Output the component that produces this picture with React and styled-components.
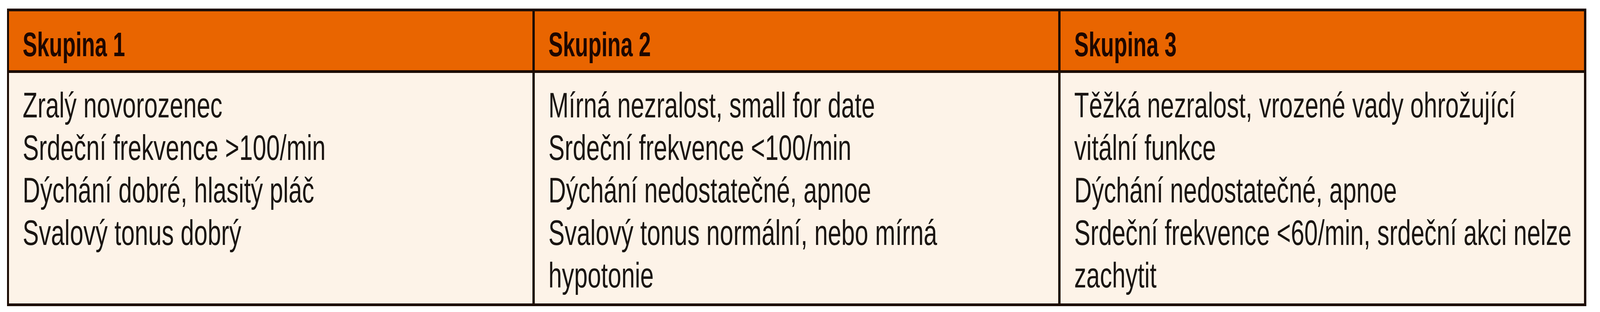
import React, { useEffect, useState } from 'react';
import styled, { createGlobalStyle } from 'styled-components';

// the layout was measured on a 5067px wide page; widths are kept relative
// so the table keeps its proportions when the window is narrower
const DESIGN_WIDTH = 5067;

const GlobalStyle = createGlobalStyle`
    html, body {
        margin: 0;
        padding: 0;
        background: #ffffff;
    }
`;

const Page = styled.div`
    padding: 22px 0 0 0.434vw;
    width: 98.7vw;
`;

// the dark background shows through the gaps and padding as the rule lines
const Table = styled.div`
    display: grid;
    grid-template-columns: repeat(3, minmax(0, 1fr));
    grid-template-rows: 151px 591px;
    gap: 7px 0.138vw;
    padding: 7px 0.138vw;
    background: #1c0c04;
    font-family: 'Liberation Sans', Arial, sans-serif;
`;

const HeadCell = styled.div`
    background: #e96500;
    color: #1e0700;
    font-weight: 700;
    font-size: 88px;
    line-height: 110px;
    padding: 30px 0 0 0.849vw;
    overflow: hidden;
`;

const BodyCell = styled.div`
    background: #fdf3e8;
    color: #1a1512;
    font-size: 91px;
    line-height: 109px;
    padding: 28px 0 0 0.849vw;
    overflow: hidden;
`;

// the print face is a condensed sans, so the lines are squeezed sideways
const Line = styled.div`
    white-space: nowrap;
    transform: scaleX(calc(var(--fit, 1) * ${({ $squeeze }) => $squeeze}));
    transform-origin: left center;
`;

const groups = [
    {
        title: 'Skupina 1',
        lines: [
            'Zralý novorozenec',
            'Srdeční frekvence >100/min',
            'Dýchání dobré, hlasitý pláč',
            'Svalový tonus dobrý',
        ],
    },
    {
        title: 'Skupina 2',
        lines: [
            'Mírná nezralost, small for date',
            'Srdeční frekvence <100/min',
            'Dýchání nedostatečné, apnoe',
            'Svalový tonus normální, nebo mírná',
            'hypotonie',
        ],
    },
    {
        title: 'Skupina 3',
        lines: [
            'Těžká nezralost, vrozené vady ohrožující',
            'vitální funkce',
            'Dýchání nedostatečné, apnoe',
            'Srdeční frekvence <60/min, srdeční akci nelze',
            'zachytit',
        ],
    },
];

const useFit = () => {
    const [fit, setFit] = useState(() => window.innerWidth / DESIGN_WIDTH);
    useEffect(() => {
        const onResize = () => setFit(window.innerWidth / DESIGN_WIDTH);
        window.addEventListener('resize', onResize);
        return () => window.removeEventListener('resize', onResize);
    }, []);
    return fit;
};

const App = () => {
    const fit = useFit();

    return (
        <>
            <GlobalStyle />
            <Page>
                <Table style={{ '--fit': fit }}>
                    {groups.map((g) => (
                        <HeadCell key={g.title}>
                            <Line $squeeze={0.78}>{g.title}</Line>
                        </HeadCell>
                    ))}
                    {groups.map((g) => (
                        <BodyCell key={g.title}>
                            {g.lines.map((l) => (
                                <Line key={l} $squeeze={0.845}>
                                    {l}
                                </Line>
                            ))}
                        </BodyCell>
                    ))}
                </Table>
            </Page>
        </>
    );
};

export default App;
